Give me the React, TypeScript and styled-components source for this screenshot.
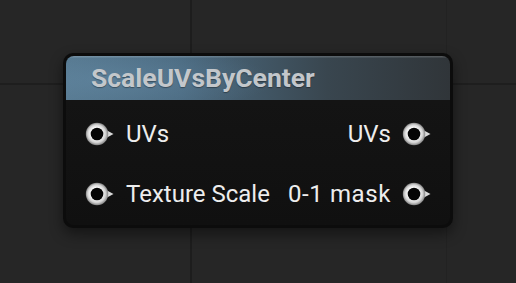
import React from 'react';
import styled, { createGlobalStyle } from 'styled-components';

const GlobalStyle = createGlobalStyle`
  html, body {
    margin: 0;
    padding: 0;
    background: #262626;
  }
  body {
    font-family: Roboto, "Liberation Sans", sans-serif;
  }
`;

const Canvas = styled.div`
  width: 516px;
  height: 283px;
  box-sizing: border-box;
  padding: 53px 0 0 63px;
  background-color: #262626;
  background-image:
    linear-gradient(to right, transparent 190px, #1d1d1d 190px, #1d1d1d 192px, transparent 192px),
    linear-gradient(to right, transparent 446px, #222222 446px, #222222 447px, transparent 447px),
    linear-gradient(to bottom, transparent 83px, #1e1e1e 83px, #1e1e1e 85px, transparent 85px);
  overflow: hidden;
`;

const Node = styled.div`
  width: 390px;
  height: 175px;
  box-sizing: border-box;
  padding: 3px;
  border-radius: 10px;
  background: #0c0c0c;
  box-shadow: 0 6px 14px rgba(0, 0, 0, 0.45);
  display: flex;
  flex-direction: column;
`;

const Header = styled.div`
  height: 44px;
  flex: none;
  border-radius: 8px 8px 0 0;
  background:
    linear-gradient(to bottom, rgba(255, 255, 255, 0.16) 0, rgba(255, 255, 255, 0.16) 1px, transparent 2px),
    radial-gradient(ellipse 60% 110% at 12% 55%, rgba(110, 150, 180, 0.35), transparent 70%),
    linear-gradient(to right, #56788f 0%, #4b6a80 30%, #39464f 68%, #303539 100%);
  display: flex;
  align-items: center;
  padding-left: 25px;
`;

const Title = styled.span`
  color: #c3c7cb;
  font-family: Roboto, "Liberation Sans", sans-serif;
  font-weight: 700;
  font-size: 26.5px;
  line-height: 1;
  margin-top: 1px;
  text-shadow: 0 1px 1px rgba(0, 0, 0, 0.35);
`;

const Body = styled.div`
  flex: 1;
  border-radius: 0 0 8px 8px;
  background: linear-gradient(to bottom, #141414, #101010);
  display: flex;
  flex-direction: column;
  padding: 22px 18px 0 19px;
  gap: 36px;
`;

const Row = styled.div`
  display: flex;
  justify-content: space-between;
  align-items: center;
  height: 24px;
`;

const Side = styled.div`
  display: flex;
  align-items: center;
  gap: 11px;
`;

const Label = styled.span<{ $wide?: boolean }>`
  color: #ededed;
  font-family: Roboto, "Liberation Sans", sans-serif;
  font-size: 24px;
  letter-spacing: ${p => (p.$wide ? '0.6px' : '0')};
  line-height: 1;
`;

const PinIcon = styled.svg`
  width: 30px;
  height: 24px;
  flex: none;
  display: block;
`;

function Pin({ id }: { id: string }) {
  return (
    <PinIcon width="30" height="24" viewBox="0 0 30 24">
      <defs>
        <radialGradient id={`ring-${id}`} cx="12" cy="12" r="11.5" fx="10.5" fy="10.5" gradientUnits="userSpaceOnUse">
          <stop offset="0.5" stopColor="#fafafa" />
          <stop offset="0.78" stopColor="#d2d2d2" />
          <stop offset="1" stopColor="#7a7a7a" />
        </radialGradient>
      </defs>
      <path d="M22 8.5 L28.5 12 L22 15.5 Z" fill="#d8d8d8" />
      <circle cx="12" cy="12" r="11.2" fill={`url(#ring-${id})`} />
      <circle cx="12" cy="12" r="6.3" fill="#050505" />
    </PinIcon>
  );
}

export default function App() {
  return (
    <>
      <GlobalStyle />
      <Canvas>
        <Node>
          <Header>
            <Title>ScaleUVsByCenter</Title>
          </Header>
          <Body>
            <Row>
              <Side>
                <Pin id="a" />
                <Label>UVs</Label>
              </Side>
              <Side>
                <Label>UVs</Label>
                <Pin id="b" />
              </Side>
            </Row>
            <Row>
              <Side>
                <Pin id="c" />
                <Label>Texture Scale</Label>
              </Side>
              <Side>
                <Label $wide>0-1 mask</Label>
                <Pin id="d" />
              </Side>
            </Row>
          </Body>
        </Node>
      </Canvas>
    </>
  );
}
